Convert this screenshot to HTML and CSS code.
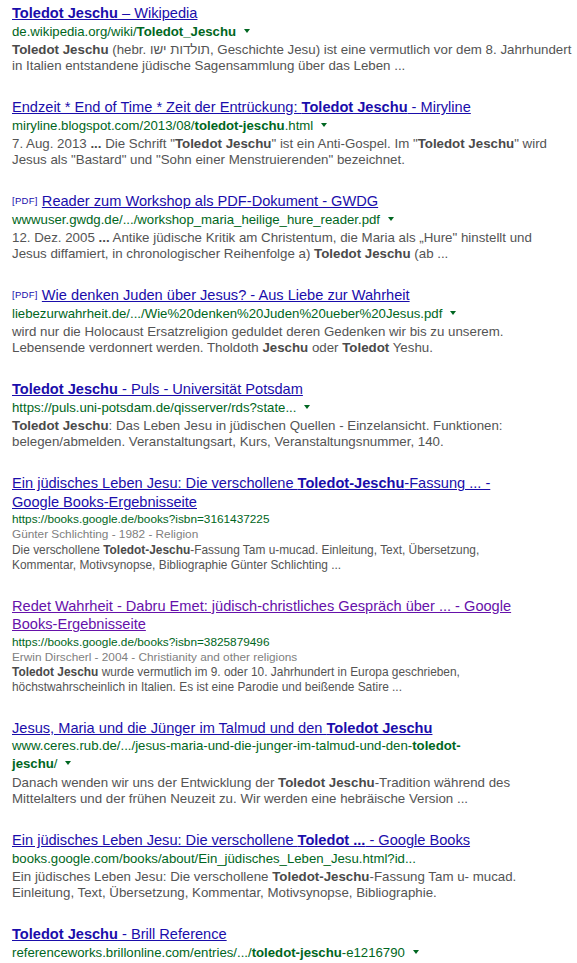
FILE: index.html
```html
<!DOCTYPE html>
<html lang="de">
<head>
<meta charset="utf-8">
<title>Toledot Jeschu - Suchergebnisse</title>
<link rel="stylesheet" href="styles.css">
</head>
<body>
<div class="results">
  <div class="result">
    <h3 class="title"><a href="#"><b>Toledot Jeschu</b> – Wikipedia</a></h3>
    <div class="url">de.wikipedia.org/wiki/<b>Toledot_Jeschu</b><span class="arrow"></span></div>
    <div class="snippet"><b>Toledot Jeschu</b> (hebr. תולדות ישו, Geschichte Jesu) ist eine vermutlich vor dem 8. Jahrhundert<br>in Italien entstandene jüdische Sagensammlung über das Leben ...</div>
  </div>

  <div class="result">
    <h3 class="title"><a href="#">Endzeit * End of Time * Zeit der Entrückung: <b>Toledot Jeschu</b> - Miryline</a></h3>
    <div class="url">miryline.blogspot.com/2013/08/<b>toledot-jeschu</b>.html<span class="arrow"></span></div>
    <div class="snippet">7. Aug. 2013 <b>...</b> Die Schrift "<b>Toledot Jeschu</b>" ist ein Anti-Gospel. Im "<b>Toledot Jeschu</b>" wird<br>Jesus als "Bastard" und "Sohn einer Menstruierenden" bezeichnet.</div>
  </div>

  <div class="result">
    <h3 class="title"><span class="filetype">[PDF]</span> <a href="#">Reader zum Workshop als PDF-Dokument - GWDG</a></h3>
    <div class="url">wwwuser.gwdg.de/.../workshop_maria_heilige_hure_reader.pdf<span class="arrow"></span></div>
    <div class="snippet">12. Dez. 2005 <b>...</b> Antike jüdische Kritik am Christentum, die Maria als „Hure" hinstellt und<br>Jesus diffamiert, in chronologischer Reihenfolge a) <b>Toledot Jeschu</b> (ab ...</div>
  </div>

  <div class="result">
    <h3 class="title"><span class="filetype">[PDF]</span> <a href="#">Wie denken Juden über Jesus? - Aus Liebe zur Wahrheit</a></h3>
    <div class="url">liebezurwahrheit.de/.../Wie%20denken%20Juden%20ueber%20Jesus.pdf<span class="arrow"></span></div>
    <div class="snippet">wird nur die Holocaust Ersatzreligion geduldet deren Gedenken wir bis zu unserem.<br>Lebensende verdonnert werden. Tholdoth <b>Jeschu</b> oder <b>Toledot</b> Yeshu.</div>
  </div>

  <div class="result">
    <h3 class="title"><a href="#"><b>Toledot Jeschu</b> - Puls - Universität Potsdam</a></h3>
    <div class="url">https://puls.uni-potsdam.de/qisserver/rds?state...<span class="arrow"></span></div>
    <div class="snippet"><b>Toledot Jeschu</b>: Das Leben Jesu in jüdischen Quellen - Einzelansicht. Funktionen:<br>belegen/abmelden. Veranstaltungsart, Kurs, Veranstaltungsnummer, 140.</div>
  </div>

  <div class="result book">
    <h3 class="title"><a href="#">Ein jüdisches Leben Jesu: Die verschollene <b>Toledot-Jeschu</b>-Fassung ... -<br>Google Books-Ergebnisseite</a></h3>
    <div class="url">https://books.google.de/books?isbn=3161437225</div>
    <div class="meta">Günter Schlichting - 1982 - Religion</div>
    <div class="snippet">Die verschollene <b>Toledot-Jeschu</b>-Fassung Tam u-mucad. Einleitung, Text, Übersetzung,<br>Kommentar, Motivsynopse, Bibliographie Günter Schlichting ...</div>
  </div>

  <div class="result book">
    <h3 class="title"><a href="#" class="visited">Redet Wahrheit - Dabru Emet: jüdisch-christliches Gespräch über ... - Google<br>Books-Ergebnisseite</a></h3>
    <div class="url">https://books.google.de/books?isbn=3825879496</div>
    <div class="meta">Erwin Dirscherl - 2004 - Christianity and other religions</div>
    <div class="snippet"><b>Toledot Jeschu</b> wurde vermutlich im 9. oder 10. Jahrhundert in Europa geschrieben,<br>höchstwahrscheinlich in Italien. Es ist eine Parodie und beißende Satire ...</div>
  </div>

  <div class="result">
    <h3 class="title"><a href="#">Jesus, Maria und die Jünger im Talmud und den <b>Toledot Jeschu</b></a></h3>
    <div class="url">www.ceres.rub.de/.../jesus-maria-und-die-junger-im-talmud-und-den-<b>toledot-</b><br><b>jeschu</b>/<span class="arrow"></span></div>
    <div class="snippet">Danach wenden wir uns der Entwicklung der <b>Toledot Jeschu</b>-Tradition während des<br>Mittelalters und der frühen Neuzeit zu. Wir werden eine hebräische Version ...</div>
  </div>

  <div class="result">
    <h3 class="title"><a href="#">Ein jüdisches Leben Jesu: Die verschollene <b>Toledot ...</b> - Google Books</a></h3>
    <div class="url">books.google.com/books/about/Ein_jüdisches_Leben_Jesu.html?id...</div>
    <div class="snippet">Ein jüdisches Leben Jesu: Die verschollene <b>Toledot-Jeschu</b>-Fassung Tam u- mucad.<br>Einleitung, Text, Übersetzung, Kommentar, Motivsynopse, Bibliographie.</div>
  </div>

  <div class="result">
    <h3 class="title"><a href="#"><b>Toledot Jeschu</b> - Brill Reference</a></h3>
    <div class="url">referenceworks.brillonline.com/entries/.../<b>toledot-jeschu</b>-e1216790<span class="arrow"></span></div>
  </div>
</div>
</body>
</html>
```

FILE: styles.css
```css
html, body {
  margin: 0;
  padding: 0;
  background: #ffffff;
}

body {
  font-family: "Liberation Sans", Arial, "DejaVu Sans", sans-serif;
  color: #545454;
}

.results {
  display: flex;
  flex-direction: column;
  gap: 23.75px;
  padding: 4px 12px 0 12px;
}

.result {
  display: flex;
  flex-direction: column;
}

.title {
  margin: 0;
  font-size: 14.6px;
  font-weight: normal;
  line-height: 18.5px;
  white-space: nowrap;
}

.title a {
  color: #1a0dab;
  text-decoration: underline;
}

.title a.visited {
  color: #6611aa;
}

.filetype {
  font-size: 9.5px;
  color: #1a0dab;
  vertical-align: 2px;
  letter-spacing: 0.3px;
}

.url {
  font-size: 13.2px;
  line-height: 18px;
  color: #006621;
  white-space: nowrap;
}

.arrow {
  display: inline-block;
  width: 0;
  height: 0;
  margin-left: 8px;
  border-left: 3px solid transparent;
  border-right: 3px solid transparent;
  border-top: 4px solid #006621;
  vertical-align: 3px;
}

.snippet {
  margin-top: 1.25px;
  font-size: 13.3px;
  line-height: 16.3px;
  color: #545454;
  white-space: nowrap;
}

.snippet b {
  color: #4a4a4a;
}

.book .url {
  font-size: 11.8px;
  line-height: 15px;
  margin-top: 1px;
}

.meta {
  font-size: 11.8px;
  line-height: 15px;
  color: #808080;
  white-space: nowrap;
}

.book .snippet {
  margin-top: 0.5px;
  font-size: 11.9px;
  line-height: 15px;
}
```
